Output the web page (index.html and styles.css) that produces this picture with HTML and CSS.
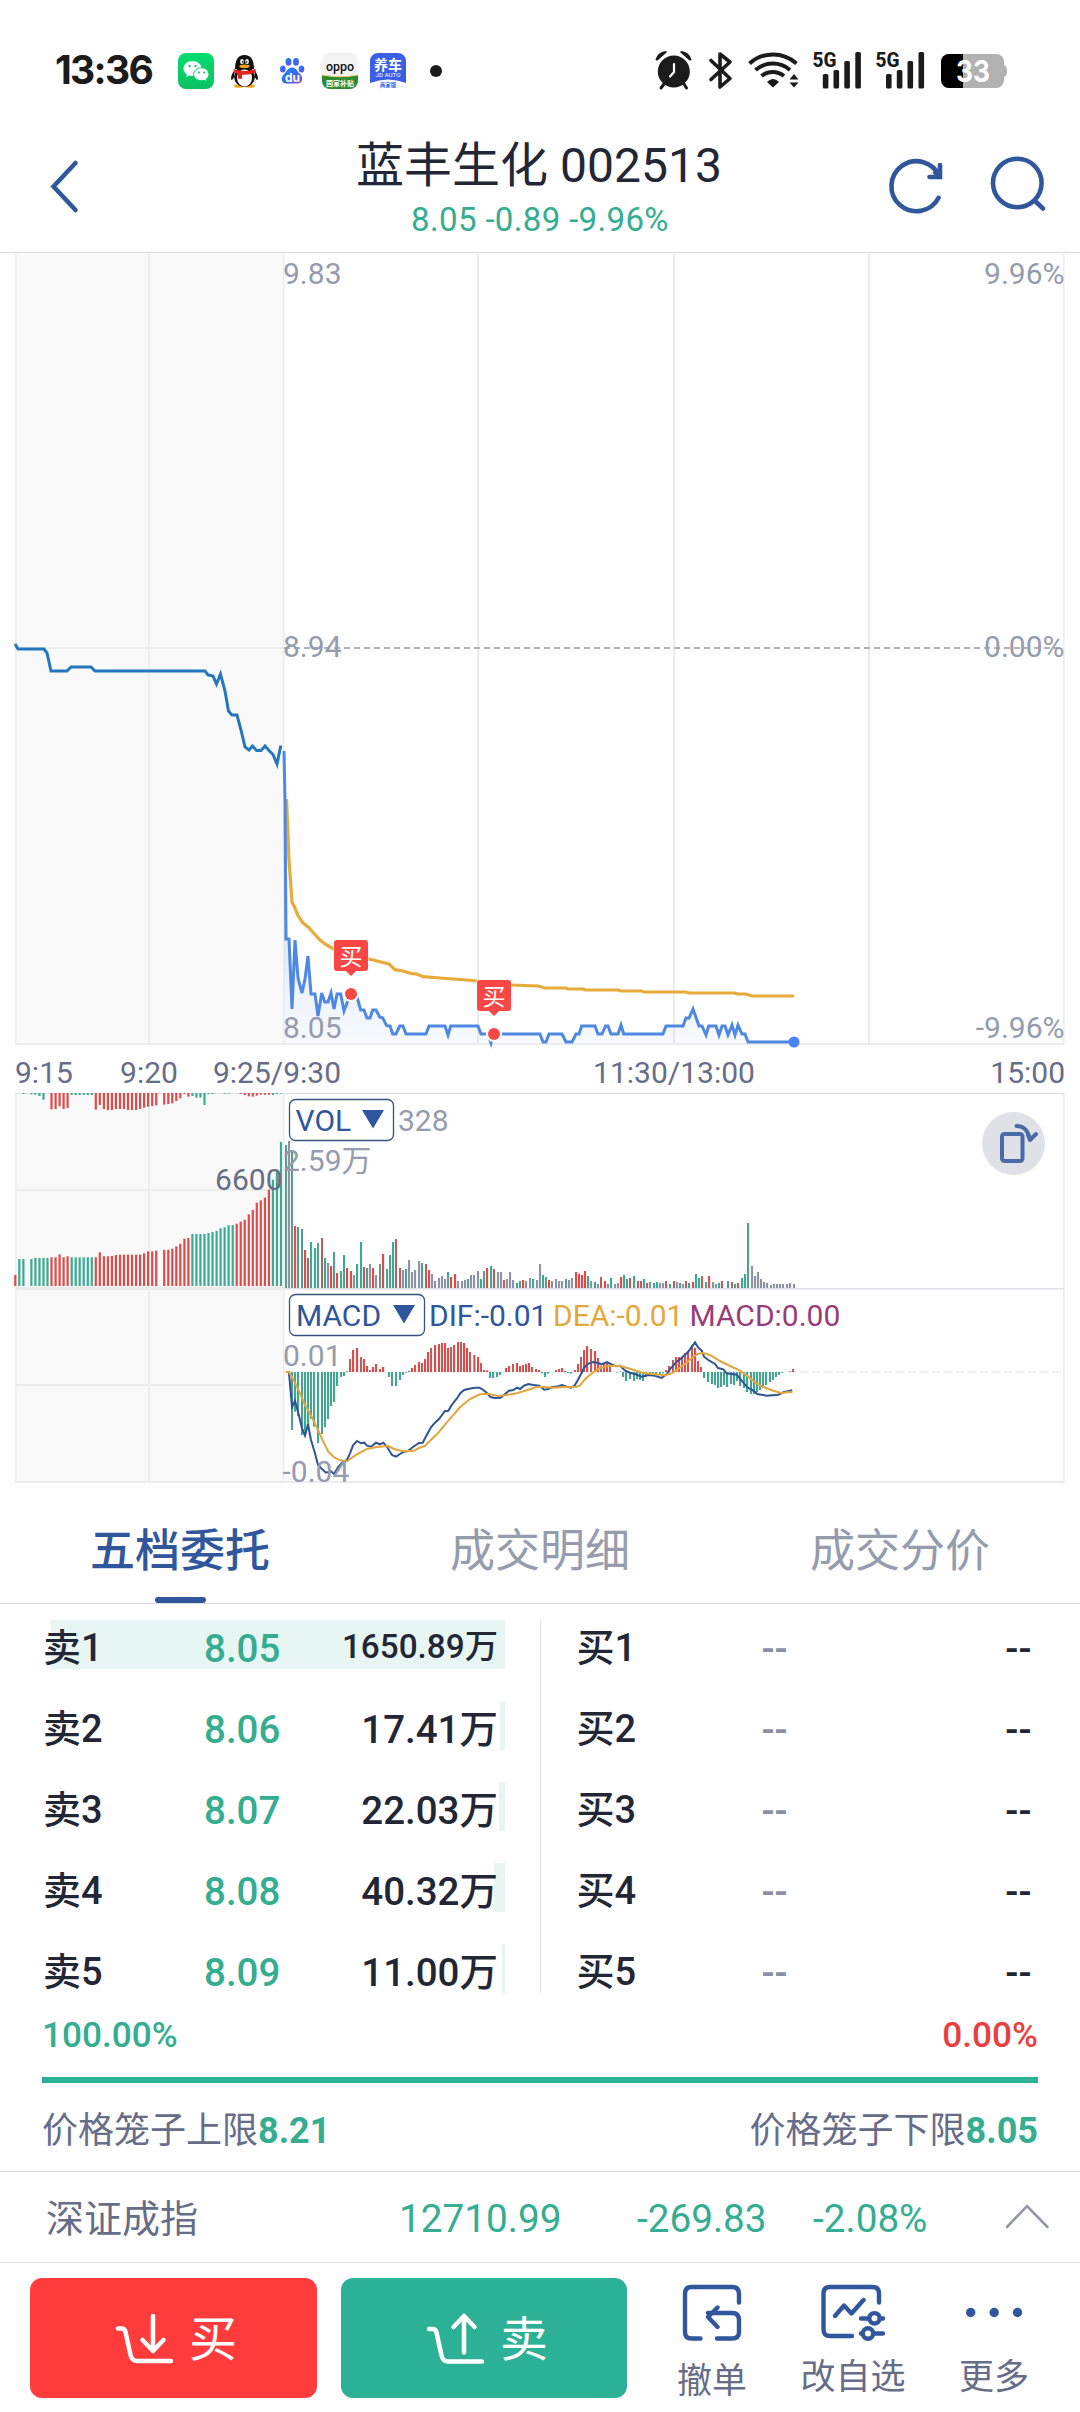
FILE: index.html
```html
<!DOCTYPE html>
<html lang="zh-CN">
<head>
<meta charset="utf-8">
<title>蓝丰生化 002513</title>
<link rel="stylesheet" href="styles.css">
</head>
<body>
<div class="status">
  <span class="clock">13:36</span>
  <svg class="apps" width="280" height="50" viewBox="170 46 280 50">
    <defs>
      <linearGradient id="wx" x1="0" y1="0" x2="0" y2="1"><stop offset="0" stop-color="#06dd70"/><stop offset="1" stop-color="#0bc160"/></linearGradient>
      <linearGradient id="du" x1="0" y1="0" x2="1" y2="1"><stop offset="0" stop-color="#1a8bf0"/><stop offset=".6" stop-color="#3d63f0"/><stop offset="1" stop-color="#a04be8"/></linearGradient>
    </defs>
    <rect x="178" y="53" width="36" height="36" rx="8" fill="url(#wx)"/>
    <path d="M192.500 61c-5 0-9 3.300-9 7.500 0 2.500 1.300 4.500 3.400 5.900l-.8 2.600 3.200-1.600c1 .3 2 .5 3.200.5 5 0 9-3.300 9-7.400s-4-7.500-9-7.500z" fill="#fff"/>
    <path d="M201.300 67.800c-4.300 0-7.700 2.900-7.700 6.500s3.400 6.400 7.700 6.400c1 0 2-.2 2.800-.4l2.500 1.300-.6-2.200c1.800-1.200 3-3 3-5.100 0-3.600-3.400-6.500-7.700-6.500z" fill="#fff" stroke="#08cf68" stroke-width="1"/>
    <g fill="#08cf68"><circle cx="189.500" cy="66" r="1.200"/><circle cx="195.500" cy="66" r="1.200"/><circle cx="199" cy="72.500" r="1"/><circle cx="204" cy="72.500" r="1"/></g>
    <path d="M234 71c-2.500 3-3.500 7-2.600 9 1 0 2-1.500 2.600-2.500zM255 71c2.500 3 3.500 7 2.600 9-1 0-2-1.500-2.600-2.500z" fill="#111"/>
    <ellipse cx="239" cy="86" rx="5" ry="1.800" fill="#f3a712"/><ellipse cx="250" cy="86" rx="5" ry="1.800" fill="#f3a712"/>
    <ellipse cx="244.500" cy="76.500" rx="10.500" ry="10.500" fill="#111"/>
    <ellipse cx="244.500" cy="78" rx="7.500" ry="8.500" fill="#fff"/>
    <path d="M235 69c0-9 3-14 9.500-14s9.500 5 9.500 14z" fill="#111"/>
    <path d="M233.500 69q11 4 22 0l.5 3.500q-7 2.800-14 2.200v4h-4v-5l-4-1z" fill="#e42320"/>
    <ellipse cx="242" cy="61.500" rx="1.900" ry="2.600" fill="#fff"/><ellipse cx="247" cy="61.500" rx="1.900" ry="2.600" fill="#fff"/>
    <circle cx="242.600" cy="61.800" r=".9" fill="#111"/><circle cx="246.500" cy="61.800" r=".9" fill="#111"/>
    <ellipse cx="244.500" cy="66.200" rx="5.200" ry="1.800" fill="#f5ab14"/>
    <g fill="url(#du)"><ellipse cx="282.800" cy="69" rx="2.800" ry="3.600"/><ellipse cx="288.500" cy="61.800" rx="3" ry="3.900"/><ellipse cx="296" cy="61.800" rx="3" ry="3.900"/><ellipse cx="301.500" cy="69" rx="2.800" ry="3.600"/>
    <path d="M292 67.500c4.500 0 5 4 8 6.500 3.500 2.800 3 9.500-2.500 9.500h-11c-5.500 0-6-6.700-2.500-9.500 3-2.500 3.500-6.500 8-6.500z"/></g>
    <text x="285" y="82" class="du">du</text>
    <rect x="322" y="53" width="36" height="36" rx="8" fill="#f3f3f3"/>
    <path d="M322 75q18 3.500 36 0v6a8 8 0 0 1-8 8h-20a8 8 0 0 1-8-8z" fill="#2f8a34"/>
    <path d="M322 75q18 3.500 36 0" fill="none" stroke="#e9cf6a" stroke-width="1"/>
    <text x="340" y="71" class="oppo" textLength="28" lengthAdjust="spacingAndGlyphs">oppo</text>
    <text x="340" y="85.500" class="tiny7">国家补贴</text>
    <path d="M378 53h20a8 8 0 0 1 8 8v22q-18-7-36 0v-22a8 8 0 0 1 8-8z" fill="#3a5fe6"/>
    <text x="388" y="70" class="yc">养车</text>
    <text x="388" y="76.500" class="jd" textLength="25" lengthAdjust="spacingAndGlyphs">JD AUTO</text>
    <text x="388" y="87" class="sj">商家版</text>
    <circle cx="436" cy="71" r="6" fill="#1b1b1b"/>
  </svg>
  <svg class="sys" width="360" height="50" viewBox="650 46 360 50">
    <g fill="#1b1b1b">
      <circle cx="673.800" cy="71.500" r="16"/>
      <path d="M655.500 59.500a11 11 0 0 1 10.500-8.500c1 .6 1 1.200.3 1.800l-8.500 7.400c-1 .7-2 .4-2.300-.7zM691.500 59.500a11 11 0 0 0-10.500-8.500c-1 .6-1 1.200-.3 1.800l8.500 7.400c1 .7 2 .4 2.300-.7z"/>
    </g>
    <path d="M664 84l-3 4M684 84l2.500 4" stroke="#1b1b1b" stroke-width="3" stroke-linecap="round"/>
    <path d="M674 64v8l-4 4.500" fill="none" stroke="#fff" stroke-width="2.200" stroke-linecap="round"/>
    <path d="M711 60.500l19 18-10 8.500v-33l10 8-19 17.500" fill="none" stroke="#1b1b1b" stroke-width="3.600" stroke-linejoin="round" stroke-linecap="round"/>
    <g fill="none" stroke="#1b1b1b" stroke-width="4"><path d="M749.500 63.500a35 35 0 0 1 47 0"/><path d="M755.500 70a26.500 26.500 0 0 1 34.500 0"/><path d="M761.500 76a17.500 17.500 0 0 1 22.500 0"/></g>
    <path d="M773 87.500l-6-5.500q6-6 12 0zM794 74l4.500 5.500h-9zM794 87.500l4.500-5h-9z" fill="#1b1b1b"/>
    <g fill="#1b1b1b"><rect x="822.800" y="74" width="5.600" height="14.500" rx="1.500"/><rect x="833.500" y="70" width="5.600" height="18.500" rx="1.500"/><rect x="844.300" y="61" width="5.600" height="27.500" rx="1.500"/><rect x="855.300" y="52" width="5.600" height="36.500" rx="1.500"/>
    <rect x="886" y="74" width="5.600" height="14.500" rx="1.500"/><rect x="896.800" y="70" width="5.600" height="18.500" rx="1.500"/><rect x="907.500" y="61" width="5.600" height="27.500" rx="1.500"/><rect x="918.500" y="52" width="5.600" height="36.500" rx="1.500"/></g>
    <text x="812.500" y="66.500" class="g5" textLength="24" lengthAdjust="spacingAndGlyphs">5G</text>
    <text x="875.500" y="66.500" class="g5" textLength="24" lengthAdjust="spacingAndGlyphs">5G</text>
    <rect x="941" y="54" width="63" height="34" rx="8" fill="#b1b1b1"/><path d="M1004 65q3 1 3 6t-3 6z" fill="#b1b1b1"/>
    <path d="M963 54h-14a8 8 0 0 0-8 8v18a8 8 0 0 0 8 8h14z" fill="#000"/>
    <text x="973" y="81.500" class="batt" textLength="34" lengthAdjust="spacingAndGlyphs">33</text>
  </svg>
</div>
<header class="head">
  <svg class="back" width="40" height="70" viewBox="44 152 40 70"><path d="M75.500 163l-22 23.500 22 23.500" fill="none" stroke="#30569c" stroke-width="4.500" stroke-linecap="round"/></svg>
  <div class="title">
    <h1>蓝丰生化 002513</h1>
    <p>8.05 -0.89 -9.96%</p>
  </div>
  <svg class="acts" width="170" height="70" viewBox="882 152 170 70">
    <g fill="none" stroke="#30569c" stroke-width="4.600" stroke-linecap="round">
      <path d="M938.600 197.800a25 25 0 1 1 1-21"/>
      <path d="M940 165v12h-10.500"/><path d="M934 171l6 6" stroke-linecap="butt"/>
      <circle cx="1017.300" cy="183" r="24.300"/><path d="M1034.500 200.500l8.500 8"/>
    </g>
  </svg>
</header>
<svg id="chart" class="chart" width="1080" height="1238" viewBox="0 252 1080 1238"></svg>
<nav class="tabs">
  <span class="tab on">五档委托</span><span class="tab">成交明细</span><span class="tab">成交分价</span>
</nav>
<section class="book">
  <div class="side sell">
    <div class="row"><i class="depth" style="width:454px"></i><span>卖1</span><b>8.05</b><em class="long">1650.89万</em></div>
    <div class="row"><i class="depth" style="width:5px"></i><span>卖2</span><b>8.06</b><em>17.41万</em></div>
    <div class="row"><i class="depth" style="width:6px"></i><span>卖3</span><b>8.07</b><em>22.03万</em></div>
    <div class="row"><i class="depth" style="width:11px"></i><span>卖4</span><b>8.08</b><em>40.32万</em></div>
    <div class="row"><i class="depth" style="width:3px"></i><span>卖5</span><b>8.09</b><em>11.00万</em></div>
  </div>
  <div class="side buy">
    <div class="row"><span>买1</span><b>--</b><em>--</em></div>
    <div class="row"><span>买2</span><b>--</b><em>--</em></div>
    <div class="row"><span>买3</span><b>--</b><em>--</em></div>
    <div class="row"><span>买4</span><b>--</b><em>--</em></div>
    <div class="row"><span>买5</span><b>--</b><em>--</em></div>
  </div>
</section>
<section class="ratio">
  <div class="pct"><span class="green">100.00%</span><span class="red">0.00%</span></div>
  <div class="meter"></div>
  <div class="cage"><span>价格笼子上限<b>8.21</b></span><span>价格笼子下限<b>8.05</b></span></div>
</section>
<section class="index">
  <span class="name">深证成指</span><span class="v1">12710.99</span><span class="v2">-269.83</span><span class="v3">-2.08%</span>
  <svg width="48" height="30" viewBox="0 0 48 30"><path d="M4 25L24 4l20.500 21" fill="none" stroke="#9298a8" stroke-width="2.600" stroke-linecap="round"/></svg>
</section>
<footer class="foot">
  <div class="btn red-bg">
    <svg width="62" height="56" viewBox="113 2308 62 56"><path d="M118 2326.500h3.500q3.300 0 4 3.500l5 23q1.500 6 6.500 6h34M153 2314v34.500M142.500 2338l10.500 11 10.500-11" fill="none" stroke="#fff" stroke-width="4.500" stroke-linecap="round" stroke-linejoin="round"/></svg><span>买</span>
  </div>
  <div class="btn green-bg">
    <svg width="62" height="56" viewBox="113 2308 62 56"><path d="M118 2327h3.500q3.300 0 4 3.500l5 23q1.500 6 6.500 6h34M153 2315v35.500M142.500 2325l10.500-11 10.500 11" fill="none" stroke="#fff" stroke-width="4.500" stroke-linecap="round" stroke-linejoin="round"/></svg><span>卖</span>
  </div>
  <div class="tool t1">
    <svg width="64" height="62" viewBox="680 2282 64 62"><path d="M700.500 2338.500h-9q-6.500 0-6.500-6.500v-38q0-7 6.500-7h40.500q7 0 7 7v8.500M717 2338.500h15q7 0 7-6.500v-12q0-7-7-7h-24M717.500 2307.500l-9.500 9.500 9.500 10" fill="none" stroke="#30569c" stroke-width="4.400" stroke-linecap="round" stroke-linejoin="round" transform="translate(0 0)"/></svg>
    <span>撤单</span>
  </div>
  <div class="tool t2">
    <svg width="68" height="62" viewBox="819 2282 68 62"><g fill="none" stroke="#30569c" stroke-width="4.400" stroke-linecap="round" stroke-linejoin="round"><path d="M852 2336h-22q-6.500 0-6.500-6.500v-36q0-6.500 6.500-6.500h42.500q6.500 0 6.500 6.500v9M835 2316l9-10.500 7.500 8 12-13.500M861 2318.500h7M880 2318.500h3M861 2333.500h1M874 2333.500h9"/><circle cx="874.500" cy="2318.300" r="5.200"/><circle cx="868" cy="2333.500" r="5.200"/></g></svg>
    <span>改自选</span>
  </div>
  <div class="tool t3">
    <svg width="60" height="62" viewBox="963 2282 60 62"><g fill="#30569c"><circle cx="969.700" cy="2312.500" r="4.700"/><circle cx="993.200" cy="2312.500" r="4.700"/><circle cx="1016.500" cy="2312.500" r="4.700"/></g></svg>
    <span>更多</span>
  </div>
</footer>
<script src="script.js"></script>
</body>
</html>
```
FILE: styles.css
```css
* { box-sizing: border-box; }
html, body { margin: 0; padding: 0; }
body {
  width: 1080px; height: 2412px; overflow: hidden; background: #fefefe;
  font-family: Roboto, "Noto Sans CJK SC", sans-serif; color: #232735;
  display: flex; flex-direction: column;
}
svg { display: block; flex: none; }
svg text { font-family: Roboto, "Noto Sans CJK SC", sans-serif; }

.status { height: 106px; padding: 46px 0 0 55px; display: flex; align-items: flex-start; flex: none; }
.clock { width: 115px; font: 700 39px/48px Inter, sans-serif; letter-spacing: -1.7px; color: #1b1b1b; }
.sys { margin-left: 200px; }
.du { font: 700 12px Inter, sans-serif !important; fill: #fff; }
.oppo { font-size: 12px; font-weight: 500; fill: #111; text-anchor: middle; }
.tiny7 { font-size: 7px; font-weight: 700; fill: #fff; text-anchor: middle; }
.yc { font-size: 14px; font-weight: 700; fill: #fff; text-anchor: middle; }
.jd { font-size: 6px; fill: #fff; text-anchor: middle; }
.sj { font-size: 5.500px; font-weight: 700; fill: #3a5fe6; text-anchor: middle; }
.g5 { font-size: 21px; font-weight: 800; fill: #1b1b1b; }
.batt { font-family: Inter, sans-serif !important; font-size: 30px; font-weight: 700; fill: #fff; text-anchor: middle; }

.head { height: 146px; padding: 0 28px 0 44px; display: grid; grid-template-columns: 248px 496px 1fr; justify-items: start; align-items: start; flex: none; }
.back { margin-top: 46px; }
.acts { margin-top: 46px; justify-self: end; }
.title { width: 496px; text-align: center; padding-top: 28px; }
h1 { margin: 0; font-size: 48px; font-weight: 400; line-height: 64px; margin-left: -2px; }
.title p { margin: 0; font-size: 33px; letter-spacing: 0.35px; line-height: 44px; color: #35ad91; }

.lab { font-size: 30px; fill: #959cab; }
.axis { font-size: 30px; fill: #676d87; }
.end { text-anchor: end; }
.mid { text-anchor: middle; }
.ind { font-size: 30px; }
.mk { font-size: 23px; fill: #fff; text-anchor: middle; }

.tabs { height: 114px; display: flex; border-bottom: 1px solid #dcdcdc; flex: none; }
.tab { width: 360px; height: 113px; text-align: center; font-size: 45px; line-height: 123px; color: #959cab; }
.tab.on { color: #30569c; font-weight: 500; display: flex; flex-direction: column; align-items: center; }
.tab.on::after { content: ""; width: 51px; height: 6px; margin-top: -16px; border-radius: 3px; background: #30569c; flex: none; }

.book { height: 390px; padding-top: 16px; display: flex; flex: none; }
.side { width: 540px; height: 373px; }
.sell { width: 541px; padding-left: 43px; border-right: 1px solid #e3e4e8; }
.buy { padding-left: 36px; }
.row { position: relative; height: 49px; margin-bottom: 32px; display: flex; align-items: center; font-size: 38.500px; line-height: 49px; font-weight: 500; }
.row > * { position: relative; top: 4px; font-style: normal; font-weight: 500; }
.row span { width: 161px; }
.row b { width: 115px; color: #35ad91; }
.row em { width: 179px; text-align: right; }
.row .long { font-size: 33.300px; top: 2px; }
.row .depth { position: absolute; right: 35px; top: 0; height: 49px; background: #e8f6f3; }
.buy .row span { width: 185px; }
.buy .row b { color: #8a90a3; }
.buy .row em { width: 155px; }
.row span { font-size: 38px; }

.ratio { height: 178px; padding: 17px 42px 0; border-bottom: 1px solid #dcdcdc; flex: none; }
.pct { display: flex; justify-content: space-between; font-size: 35.200px; line-height: 48px; font-weight: 500; }
.green { color: #35ad91; }
.red { color: #e8403f; }
.meter { height: 6px; margin-top: 18px; background: #2cb096; }
.cage { display: flex; justify-content: space-between; margin-top: 22px; font-size: 36px; line-height: 52px; color: #676d87; }
.cage b { color: #35ad91; font-size: 36px; font-weight: 700; }

.index { height: 91px; padding: 3px 0 0 46px; border-bottom: 1px solid #dcdcdc; display: flex; align-items: center; font-size: 38.700px; line-height: 60px; color: #35ad91; flex: none; }
.index .name { width: 353px; color: #676d87; font-size: 38px; }
.index .v1 { width: 238px; }
.index .v2 { width: 176px; }
.index .v3 { width: 190px; }
.index svg { margin-top: -3px; }

.foot { height: 149px; padding: 15px 0 0 30px; display: flex; align-items: flex-start; flex: none; }
.btn { width: 287px; height: 120px; border-radius: 12px; margin-right: 24px; padding-left: 83px; display: flex; align-items: center; font-size: 48px; color: #fff; }
.btn span { margin-left: 14px; padding-top: 3px; line-height: 60px; }
.red-bg { background: #ff3b3b; }
.green-bg { background: #2cb096; width: 286px; }
.tool { display: flex; flex-direction: column; align-items: center; font-size: 35px; line-height: 50px; color: #676d87; padding-top: 4px; }
.tool span { white-space: nowrap; }
.t1 { width: 120px; margin-left: 1px; }
.t1 span { margin-top: 13px; }
.t2 { width: 162px; }
.t2 span, .t3 span { margin-top: 9px; }
.t3 { width: 120px; }
```
FILE: script.js
```js
const G = '#3aab91', T = '#559d8f', R = '#e24a49', M = '#b8605f', D = '#8d92a4';
const COL = { g: G, t: T, r: R, m: M, d: D };
let out = '';
const rect = (x, y, w, h, f) => { out += `<rect x="${x}" y="${y}" width="${w}" height="${h}" fill="${f}"/>`; };
const text = (x, y, c, s, extra = '') => { out += `<text x="${x}" y="${y}" class="${c}" ${extra}>${s}</text>`; };
const line = (pts, c, w) => { out += `<polyline points="${pts}" fill="none" stroke="${c}" stroke-width="${w}" stroke-linejoin="miter"/>`; };
// Points are stored in thirds of a pixel from an origin.
const scale = (s, ox, oy) => s.trim().split(/\s+/).map(p => { const [x, y] = p.split(',').map(Number); return (ox + x / 3).toFixed(1) + ',' + (oy + y / 3).toFixed(1); }).join(' ');

// Frame and grid
rect(0, 252, 1080, 1, '#dcdcdc');
rect(15, 253, 269, 791, '#f9f9f9');
rect(15, 1093, 269, 390, '#f9f9f9');
const grid = '#ececee';
for (const x of [148, 477, 673, 868]) rect(x, 254, 2, 790, grid);
for (const x of [15, 283, 1063]) { rect(x, 254, 1.5, 790, grid); rect(x, 1093, 1.5, 390, grid); }
rect(148, 1093, 2, 390, grid);
rect(15, 1043, 1049, 2, grid);
rect(15, 647, 269, 2, grid);
rect(15, 1093, 1049, 1, '#dfdfe2');
rect(15, 1189, 269, 2, grid);
rect(15, 1287, 269, 3, grid);
rect(284, 1288, 780, 1.5, '#e0e3e5');
rect(15, 1384, 269, 2, grid);
rect(15, 1481, 1049, 2, grid);

// Price chart
out += '<line x1="284" y1="648" x2="1064" y2="648" stroke="#959ba8" stroke-width="1.500" stroke-dasharray="6 4"/>';
const price = '284,751 285,800 286,939 289,939 292,1009 295,940 298,978 302,993 305,979 308,956 311,994 315,994 318,1016 321.7,993 324.7,1002 328,1002 331,993 334,1009 337,994 340.7,994 344,1011 347,1003 351,994 357,997 360.7,1010 364,1010 367,1018 370,1018 372.7,1010 376,1010 379.7,1017 382.7,1018 386.7,1025.7 390,1026 392.7,1034 396,1034 399.7,1026 403,1026 406,1034 426,1034 429,1026 445,1026 448,1035 450.7,1026 478,1026 481,1034 488,1034 491,1043 493,1034 540,1034 543,1042 546,1042 549,1034 562,1034 566,1042 572,1042 576,1034 579,1034 581.7,1026 595,1026 598,1034 602,1034 605.5,1026 608,1026 611,1034 618,1034 621,1025 623.7,1034 663,1034 666,1026 683,1026 686,1018 689,1018 693,1009 699,1026 702,1026 706,1035 708.7,1026 716,1026 719,1035 722,1026 725,1026 728,1035 732,1025 735,1035 738,1025 742,1034 745,1034 748,1042 794,1042';
out += '<defs><linearGradient id="fill" x1="0" y1="751" x2="0" y2="1043" gradientUnits="userSpaceOnUse"><stop offset="0" stop-color="#4b85ee" stop-opacity=".45"/><stop offset=".8" stop-color="#4b85ee" stop-opacity=".1"/><stop offset="1" stop-color="#4b85ee" stop-opacity=".04"/></linearGradient></defs>';
out += `<polygon points="${price} 794,1043 284,1043" fill="url(#fill)"/>`;
line('15,644 18,649 44,649 47,653 51,671 67,671 71,667 91,667 95,671 205,671 208,675 213,676 216.500,684 220.500,674 225,691 228.500,711 232,715 237,715 241,730 245,747 249,750 252.500,746 256.500,750.500 261,750.500 265,746 269,750.500 273,754.500 277,764 280.500,747 282,747', '#2577bd', 3);
line('286.5,799 289,860 292,902 295,908 298,915.5 302.7,922.7 308,927 312.7,932 320,940 325,944 333,948.7 351,954 369,959 389,964 395,969.7 403,971 411.7,973.7 416.7,974 423,976.7 440,978 466.7,980 476.7,981 511.7,985 538,986 545,988 566,988 568,989 583,989 585.5,990 618.5,990 621,991 641.6,991 644,992 686,992 689,993 734.6,993 737.7,994 745.6,994 752,996 794,996', '#e8aa39', 3.2);
line(price, '#4f88e2', 3);
out += '<circle cx="794" cy="1042" r="5.500" fill="#4a84fa"/>';
for (const [x, y] of [[351, 994], [494, 1034]]) {
  out += `<rect x="${x - 17.5}" y="${y - 54.5}" width="35" height="32" rx="3" fill="#fff"/><path d="M${x - 17} ${y - 51}q0-3 3-3h28q3 0 3 3v25q0 3-3 3h-9l-5 5-5-5h-9q-3 0-3-3z" fill="#f94745"/>`;
  text(x, y - 29.5, 'mk', '买');
  out += `<circle cx="${x}" cy="${y}" r="8" fill="#fff"/><circle cx="${x}" cy="${y}" r="6" fill="#f94745"/>`;
}
text(283, 284, 'lab', '9.83'); text(1064.5, 284, 'lab end', '9.96%');
text(283, 657, 'lab', '8.94'); text(1064.5, 657, 'lab end', '0.00%');
text(283, 1038, 'lab', '8.05'); text(1064.5, 1038, 'lab end', '-9.96%');
text(15, 1083, 'axis', '9:15'); text(149, 1083, 'axis mid', '9:20'); text(277, 1083, 'axis mid', '9:25/9:30');
text(674, 1083, 'axis mid', '11:30/13:00'); text(1065, 1083, 'axis end', '15:00');

// Call auction: matched volume below, unmatched volume above
const lower = 'r585 g537 g537 - g537 g534 g534 g534 g534 r532 r532 r523 r532 r529 g532 g532 g532 g532 g532 g532 r532 r517 r529 r529 r528 r525 r524 r524 r524 r524 r524 r524 r520 r514 r514 r512 - r510 r509 r506 r499 r491 r476 r474 g462 g462 g462 g462 g459 g456 g453 g445 g442 g436 g435 r431 r425 r419 r403 r390 r368 r361 r353 r329 g299 g277 g186';
const upper = '- - g42 - g43 g44 g48 g59 - r88 r87 r79 r87 r84 g45 g45 g45 g45 g45 g45 r89 r75 r87 r90 r90 r87 r87 r87 r90 r90 r90 r87 r83 r80 r78 r76 - r74 r72 r70 r63 r55 r42 r50 g48 g53 g53 g75 g42 g42 - - g41 g41 - - r42 r45 r49 r50 r47 r44 r44 r44 g45 g42 g41';
const auction = (s, top) => s.split(' ').forEach((v, i) => {
  if (v === '-') return;
  const x = (14.2 + i * 4.025).toFixed(1), y = 1080 + v.slice(1) / 3;
  if (top) rect(x, 1093, 2.2, y - 1093, COL[v[0]]); else rect(x, y.toFixed(1), 2.2, (1286 - y).toFixed(1), COL[v[0]]);
});
auction(lower, false); auction(upper, true);

// Session volume: x, top, colour
const vol1 = '48,195,t 57,183,d 66,215,t 75,438,r 84,441,t 96,447,t 105,510,r 114,534,m 123,486,g 135,504,g 144,489,t 156,474,m 165,534,g 174,549,d 183,558,r 192,516,t 201,579,r 213,573,g 222,525,g 231,564,r 243,573,r 252,585,d 261,552,g 273,486,g 282,561,m 291,564,t 300,552,d 309,564,r 318,585,d 330,552,t 339,522,r 351,567,g 360,525,t 369,486,g 378,477,m 390,564,m 399,570,d 408,567,t 417,540,d 426,576,d 435,570,d 447,543,d 456,549,t 468,552,m 477,570,r 486,582,d 495,603,d 507,594,d 516,588,d 525,597,d 534,576,g 543,591,r 555,582,r 564,603,d 576,603,d 585,600,d 594,597,t 603,585,d 612,585,d 624,573,d 633,597,g 642,573,t 651,564,r 663,558,g 672,567,m 684,576,d 693,576,d 702,600,m 711,597,d 720,576,d 729,600,d 741,609,g 750,603,t 759,600,r 768,603,d 780,594,d 789,597,g 801,600,d 810,552,d 819,585,g 828,591,t 837,600,r 846,603,d 858,597,d 867,603,d 876,603,d 888,597,t 897,600,d';
const vol2 = '96,594,d 108,576,r 117,582,r 126,585,r 135,573,r 144,588,g 153,603,d 165,606,g 174,612,d 183,591,m 195,603,r 204,612,d 213,594,g 225,612,d 234,609,d 243,591,r 252,585,g 261,597,t 270,594,m 282,588,g 294,603,m 303,603,m 312,597,g 321,609,m 330,606,d 342,609,g 351,606,g 360,609,d 369,609,d 378,603,m 390,612,g 402,603,m 411,606,d 420,609,t 429,612,d 438,603,m 447,609,g 459,606,r 468,582,g 477,594,g 486,588,m 498,606,g 507,588,r 519,606,d 528,612,d 537,609,g 546,603,m 564,603,t 576,606,m 585,612,g 594,609,m 606,594,g 615,582,g 624,429,t 636,558,d 645,588,d 654,576,d 663,597,d 672,606,d 681,609,d 693,615,d 702,612,d 711,612,d 720,612,d 729,612,d 741,612,d 750,609,d 762,612,d';
const volume = (s, ox) => s.split(' ').forEach(b => { const [x, y, c] = b.split(','); rect((ox + x / 3).toFixed(1), (1080 + y / 3).toFixed(1), 2.1, ((624 - y) / 3).toFixed(1), COL[c]); });
volume(vol1, 269); volume(vol2, 539);

// MACD histogram
const zero = 1372;
out += `<line x1="284" y1="${zero}" x2="1064" y2="${zero}" stroke="#ececec" stroke-width="1.500" stroke-dasharray="8 4"/>`;
const hist1 = '57,285 66,450 75,395 84,408 96,465 105,455 114,432 123,417 132,440 144,489 156,462 165,441 174,417 183,378 192,366 201,318 213,291 222,288 231,274 240,237 249,210 261,204 273,231 282,237 291,258 300,270 309,261 318,252 330,267 339,261 357,291 366,318 378,318 390,300 399,285 408,278 417,273 426,264 435,255 447,246 456,249 465,237 474,216 483,204 495,195 507,192 516,189 525,189 534,204 543,201 552,195 564,186 573,186 582,189 591,204 600,216 613,225 624,231 633,249 642,270 651,271 660,294 669,294 681,291 690,285 708,264 717,258 729,252 741,249 750,258 759,255 768,252 777,249 786,261 798,267 807,270 816,280 825,291 834,281 858,270 867,267 876,264 885,273 894,279';
const hist2 = '84,279 93,281 105,270 114,252 123,231 132,210 141,198 153,207 165,213 174,234 183,258 192,249 201,249 210,261 231,278 240,275 249,291 258,303 270,297 282,303 291,297 300,300 309,303 318,291 330,288 339,285 348,282 360,285 369,280 378,270 387,258 399,240 408,231 417,231 426,231 435,219 444,213 456,195 465,204 474,243 483,261 492,294 504,306 516,312 525,315 534,324 543,321 552,315 561,321 573,312 582,315 591,303 600,318 612,324 621,336 633,342 642,342 651,336 660,330 669,324 678,315 690,306 699,300 708,291 717,285 727,278 750,274 759,267';
const hist = (s, ox) => s.split(' ').forEach((b, i) => {
  const [x, y] = b.split(',').map(Number), px = (ox - 1 + x / 3).toFixed(1), h = Math.abs(y - 276) / 3;
  if (y < 276) rect(px, zero - h, 2.1, h, i % 3 === 1 ? M : R); else rect(px, zero, 2.1, h, i % 3 === 1 ? T : G);
});
hist(hist1, 270); hist(hist2, 540);
const dif = scale('57,278 66,382 75,362 84,395 96,445 105,467 114,433 123,480 135,520 144,555 156,567 168,578 183,574 192,582 204,562 216,548 231,540 240,520 249,496 261,483 273,490 283,488 291,497 303,500 318,488 330,493 340,488 352,502 366,525 378,530 390,522 402,515 414,513 430,500 447,489 458,488 470,465 483,442 495,428 507,417 525,393 535,392 545,375 560,356 572,338 583,330 598,326 615,323 628,323 636,327 650,338 660,350 672,354 692,353 705,342 717,332 730,330 741,323 750,327 762,317 775,312 790,315 808,317', 270, 1280) + ' ' +
  scale('13,329 25,327 35,322 55,319 66,315 80,320 93,323 103,318 112,303 125,278 132,264 142,252 160,246 172,248 184,253 200,246 212,252 228,259 240,257 256,272 270,278 285,282 305,290 325,285 345,287 365,294 380,282 392,265 410,245 425,233 445,215 465,187 475,203 485,212 492,230 505,240 525,252 534,264 550,268 560,280 590,284 605,302 622,322 640,332 652,342 680,347 715,344 730,337 757,331', 540, 1280);
const dea = scale('48,276 57,276 75,308 90,340 105,375 123,407 144,450 160,485 175,515 192,532 210,541 231,544 250,530 270,518 290,507 320,501 355,498 372,507 395,513 430,513 447,504 465,498 480,482 505,458 535,422 570,382 600,357 630,343 655,341 685,348 710,345 740,340 765,332 800,321', 270, 1280) + ' ' +
  scale('0,320 40,323 75,321 110,320 120,316 135,298 150,284 165,273 185,262 212,257 240,258 270,266 300,276 320,280 345,283 375,286 395,280 410,270 435,252 460,230 475,221 490,219 512,226 540,243 570,258 600,272 625,290 650,310 672,322 700,332 725,340 740,337 757,336', 540, 1280);
line(dif, '#2f5491', 2); line(dea, '#e3a63c', 2);

// Indicator labels
text(283, 1171, 'lab', '2.59万'); text(282.5, 1190, 'axis end', '6600');
out += '<g fill="#fff" stroke="#35547f" stroke-width="1.300"><rect x="289.500" y="1099.500" width="104" height="41" rx="6"/><rect x="289.500" y="1294.500" width="135" height="41" rx="6"/></g>';
out += '<path d="M362 1110h22l-11 18.500zM393 1305h22l-11 18.500z" fill="#2f569f"/>';
text(295.5, 1131, 'ind', 'VOL', 'fill="#2f569b"'); text(398, 1131, 'lab', '328');
text(296, 1326, 'ind', 'MACD', 'fill="#2f569b"'); text(429, 1326, 'ind', 'DIF:-0.01', 'fill="#2f569b"');
text(553, 1326, 'ind', 'DEA:-0.01', 'fill="#e5a83b"'); text(689.5, 1326, 'ind', 'MACD:0.00', 'fill="#983d78"');
text(283, 1366, 'lab', '0.01'); text(282.5, 1482, 'lab', '-0.04');

// Rotate button
out += '<circle cx="1013.500" cy="1143.500" r="31.500" fill="#e0e1e6"/><g fill="none" stroke="#496ca8" stroke-width="4" stroke-linecap="round" stroke-linejoin="round"><rect x="1002" y="1134" width="20.500" height="27" rx="2.500"/><path d="M1016.500 1126q11 0 13.500 14M1036 1134l-6 6-2-5"/></g>';
document.getElementById('chart').innerHTML = out;
```
